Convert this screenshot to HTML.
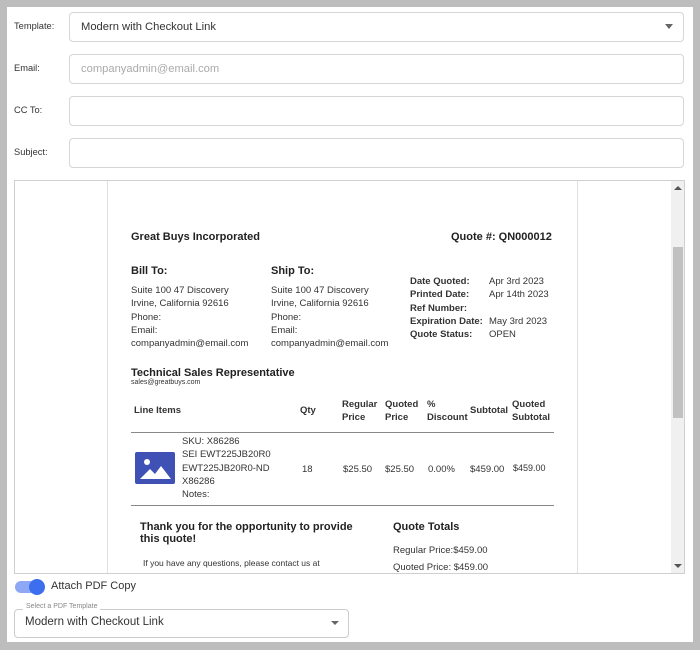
<!DOCTYPE html>
<html><head><style>
*{box-sizing:border-box;margin:0;padding:0}
body{width:700px;height:650px;background:#bdbdbd;font-family:"Liberation Sans",Arial,sans-serif;position:relative;overflow:hidden;color:#222}
.panel{position:absolute;left:7px;top:7px;width:686px;height:635px;background:#fff}
.lbl{position:absolute;left:14px;font-size:9.3px;color:#333}
.inp{position:absolute;left:69px;width:615px;height:30px;border:1px solid #d6d6d6;border-radius:4px;font-size:11.2px;padding:8px 11px;color:#333}
.a{position:absolute;white-space:nowrap}
.b{font-weight:bold}
.s{font-size:9.5px;color:#333;line-height:13.3px}
</style></head><body>
<div class="panel"></div>
<div class="lbl" style="top:21px">Template:</div>
<div class="inp" style="top:12px">Modern with Checkout Link<span style="position:absolute;right:10px;top:11px;border-left:4px solid transparent;border-right:4px solid transparent;border-top:5px solid #666"></span></div>
<div class="lbl" style="top:63px">Email:</div>
<div class="inp" style="top:54px;color:#aaa">companyadmin@email.com</div>
<div class="lbl" style="top:105px">CC To:</div>
<div class="inp" style="top:96px"></div>
<div class="lbl" style="top:147px">Subject:</div>
<div class="inp" style="top:138px"></div>

<div style="position:absolute;left:14px;top:180px;width:671px;height:394px;border:1px solid #d0d0d0;overflow:hidden;background:#fff">
 <div style="position:absolute;left:92px;top:0;width:1px;height:394px;background:#e0e0e0"></div>
 <div style="position:absolute;left:562px;top:0;width:1px;height:394px;background:#e0e0e0"></div>
 <div style="position:absolute;left:656px;top:0;width:14px;height:394px;background:#f0f0f0"></div>
 <div style="position:absolute;left:658px;top:66px;width:10px;height:171px;background:#c1c1c1"></div>
 <div style="position:absolute;left:659px;top:5px;border-left:4px solid transparent;border-right:4px solid transparent;border-bottom:4px solid #555"></div>
 <div style="position:absolute;left:659px;top:383px;border-left:4px solid transparent;border-right:4px solid transparent;border-top:4px solid #555"></div>
</div>

<div class="a b" style="left:131px;top:231px;font-size:11px">Great Buys Incorporated</div>
<div class="a b" style="left:451px;top:231px;font-size:11px">Quote #: QN000012</div>
<div class="a b" style="left:131px;top:265px;font-size:11px">Bill To:</div>
<div class="a b" style="left:271px;top:265px;font-size:11px">Ship To:</div>
<div class="a s" style="left:131px;top:284px">Suite 100 47 Discovery<br>Irvine, California 92616<br>Phone:<br>Email:<br>companyadmin@email.com</div>
<div class="a s" style="left:271px;top:284px">Suite 100 47 Discovery<br>Irvine, California 92616<br>Phone:<br>Email:<br>companyadmin@email.com</div>
<div class="a s b" style="left:410px;top:275px">Date Quoted:<br>Printed Date:<br>Ref Number:<br>Expiration Date:<br>Quote Status:</div>
<div class="a s" style="left:489px;top:275px">Apr 3rd 2023<br>Apr 14th 2023<br><br>May 3rd 2023<br>OPEN</div>
<div class="a b" style="left:131px;top:367px;font-size:11px">Technical Sales Representative</div>
<div class="a" style="left:131px;top:379px;font-size:7px;color:#333">sales@greatbuys.com</div>
<div class="a s b" style="left:134px;top:404px">Line Items</div>
<div class="a s b" style="left:300px;top:404px">Qty</div>
<div class="a s b" style="left:342px;top:398px">Regular<br>Price</div>
<div class="a s b" style="left:385px;top:398px">Quoted<br>Price</div>
<div class="a s b" style="left:427px;top:398px">%<br>Discount</div>
<div class="a s b" style="left:470px;top:404px">Subtotal</div>
<div class="a s b" style="left:512px;top:398px">Quoted<br>Subtotal</div>
<div class="a" style="left:131px;top:432px;width:423px;height:1px;background:#888"></div>
<div class="a" style="left:135px;top:452px;width:40px;height:32px;background:#3f51b5;border-radius:2px">
<svg width="40" height="32" viewBox="0 0 40 32"><circle cx="12" cy="10" r="3" fill="#fff"/><path d="M5 27 L15 17 L20 22 L26 14 L36 27 Z" fill="#fff"/></svg></div>
<div class="a s" style="left:182px;top:435px">SKU: X86286<br>SEI EWT225JB20R0<br>EWT225JB20R0-ND<br>X86286<br>Notes:</div>
<div class="a s" style="left:302px;top:463px">18</div>
<div class="a s" style="left:343px;top:463px">$25.50</div>
<div class="a s" style="left:385px;top:463px">$25.50</div>
<div class="a s" style="left:428px;top:463px">0.00%</div>
<div class="a s" style="left:470px;top:463px">$459.00</div>
<div class="a" style="left:513px;top:463px;font-size:9px;color:#333">$459.00</div>
<div class="a" style="left:131px;top:505px;width:423px;height:1px;background:#888"></div>
<div class="a b" style="left:140px;top:521px;font-size:11px;line-height:12px">Thank you for the opportunity to provide<br>this quote!</div>
<div class="a b" style="left:393px;top:521px;font-size:11px">Quote Totals</div>
<div class="a" style="left:143px;top:558px;font-size:8.5px;color:#333">If you have any questions, please contact us at</div>
<div class="a s" style="left:393px;top:542px;line-height:17px">Regular Price:$459.00<br>Quoted Price: $459.00</div>

<div class="a" style="left:15px;top:581px;width:29px;height:12px;border-radius:6px;background:#8fa8f5"></div>
<div class="a" style="left:29px;top:579px;width:16px;height:16px;border-radius:50%;background:#3d6ef0"></div>
<div class="a" style="left:51px;top:580px;font-size:11px;color:#333">Attach PDF Copy</div>
<div class="a" style="left:14px;top:609px;width:335px;height:29px;border:1px solid #ccc;border-radius:4px"></div>
<div class="a" style="left:23px;top:603px;font-size:7px;color:#888;background:#fff;padding:0 3px">Select a PDF Template</div>
<div class="a" style="left:25px;top:616px;font-size:11.5px;color:#333">Modern with Checkout Link</div>
<div class="a" style="left:331px;top:621px;border-left:4px solid transparent;border-right:4px solid transparent;border-top:4px solid #666"></div>
</body></html>
